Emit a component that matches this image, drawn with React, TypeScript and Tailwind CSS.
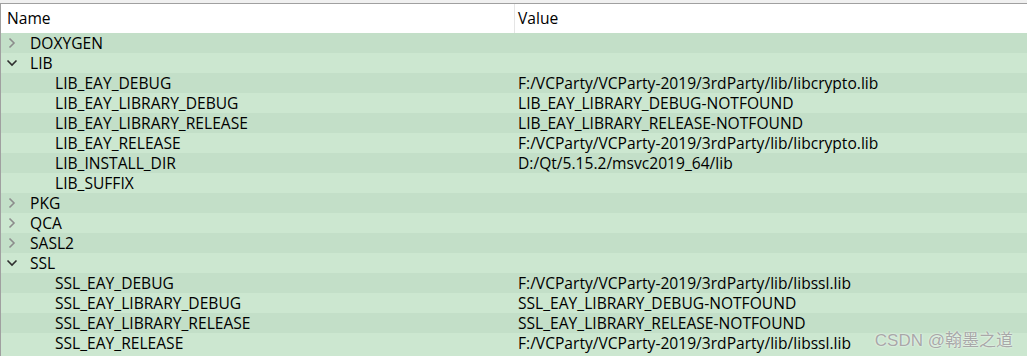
type Row = { name: string; value?: string; level: 0 | 1; open?: boolean };

const rows: Row[] = [
  { name: "DOXYGEN", level: 0 },
  { name: "LIB", level: 0, open: true },
  { name: "LIB_EAY_DEBUG", value: "F:/VCParty/VCParty-2019/3rdParty/lib/libcrypto.lib", level: 1 },
  { name: "LIB_EAY_LIBRARY_DEBUG", value: "LIB_EAY_LIBRARY_DEBUG-NOTFOUND", level: 1 },
  { name: "LIB_EAY_LIBRARY_RELEASE", value: "LIB_EAY_LIBRARY_RELEASE-NOTFOUND", level: 1 },
  { name: "LIB_EAY_RELEASE", value: "F:/VCParty/VCParty-2019/3rdParty/lib/libcrypto.lib", level: 1 },
  { name: "LIB_INSTALL_DIR", value: "D:/Qt/5.15.2/msvc2019_64/lib", level: 1 },
  { name: "LIB_SUFFIX", value: "", level: 1 },
  { name: "PKG", level: 0 },
  { name: "QCA", level: 0 },
  { name: "SASL2", level: 0 },
  { name: "SSL", level: 0, open: true },
  { name: "SSL_EAY_DEBUG", value: "F:/VCParty/VCParty-2019/3rdParty/lib/libssl.lib", level: 1 },
  { name: "SSL_EAY_LIBRARY_DEBUG", value: "SSL_EAY_LIBRARY_DEBUG-NOTFOUND", level: 1 },
  { name: "SSL_EAY_LIBRARY_RELEASE", value: "SSL_EAY_LIBRARY_RELEASE-NOTFOUND", level: 1 },
  { name: "SSL_EAY_RELEASE", value: "F:/VCParty/VCParty-2019/3rdParty/lib/libssl.lib", level: 1 },
];

const Arrow = ({ open }: { open?: boolean }) =>
  open ? (
    <svg width="12" height="12" viewBox="0 0 12 12" fill="none">
      <path d="M1.5 3.5 6 8l4.5-4.5" stroke="#2e2e2e" strokeWidth="1.6" />
    </svg>
  ) : (
    <svg width="12" height="12" viewBox="0 0 12 12" fill="none">
      <path d="M3.5 1.5 8 6l-4.5 4.5" stroke="#8c8c8c" strokeWidth="1.6" />
    </svg>
  );

export default function App() {
  return (
    <div className="relative w-[1027px] h-[356px] overflow-hidden bg-[#f0f0f0] pt-[3px] font-['Open_Sans',sans-serif] text-[15.6px] text-black">
      <div className="h-full border-t border-l border-[#a0a0a0] bg-[#cce7d0]">
        <div className="h-[29px] bg-white grid grid-cols-[514px_1fr]">
          <div className="border-r border-[#e5e5e5] pl-[6px] flex items-center">Name</div>
          <div className="pl-[3px] flex items-center">Value</div>
        </div>
        {rows.map((r, i) => (
          <div
            key={r.name}
            className={
              "h-5 grid grid-cols-[515px_1fr] items-center leading-5 " +
              (i % 2 === 0 ? "bg-[#c3dfc8]" : "bg-[#cce7d0]")
            }
          >
            <div className="flex items-center">
              {r.level === 0 ? (
                <>
                  <span className="w-[29px] pl-[5px] flex items-center">
                    <Arrow open={r.open} />
                  </span>
                  <span>{r.name}</span>
                </>
              ) : (
                <span className="pl-[54px]">{r.name}</span>
              )}
            </div>
            <div className="pl-[2px] whitespace-nowrap">{r.value}</div>
          </div>
        ))}
      </div>
      <div className="absolute right-[14px] bottom-[7px] text-[17px] leading-none text-[#a8a8a8] font-['Liberation_Sans','Noto_Sans_CJK_SC',sans-serif] [text-shadow:0_0_2px_#fff]">
        CSDN @翰墨之道
      </div>
    </div>
  );
}
